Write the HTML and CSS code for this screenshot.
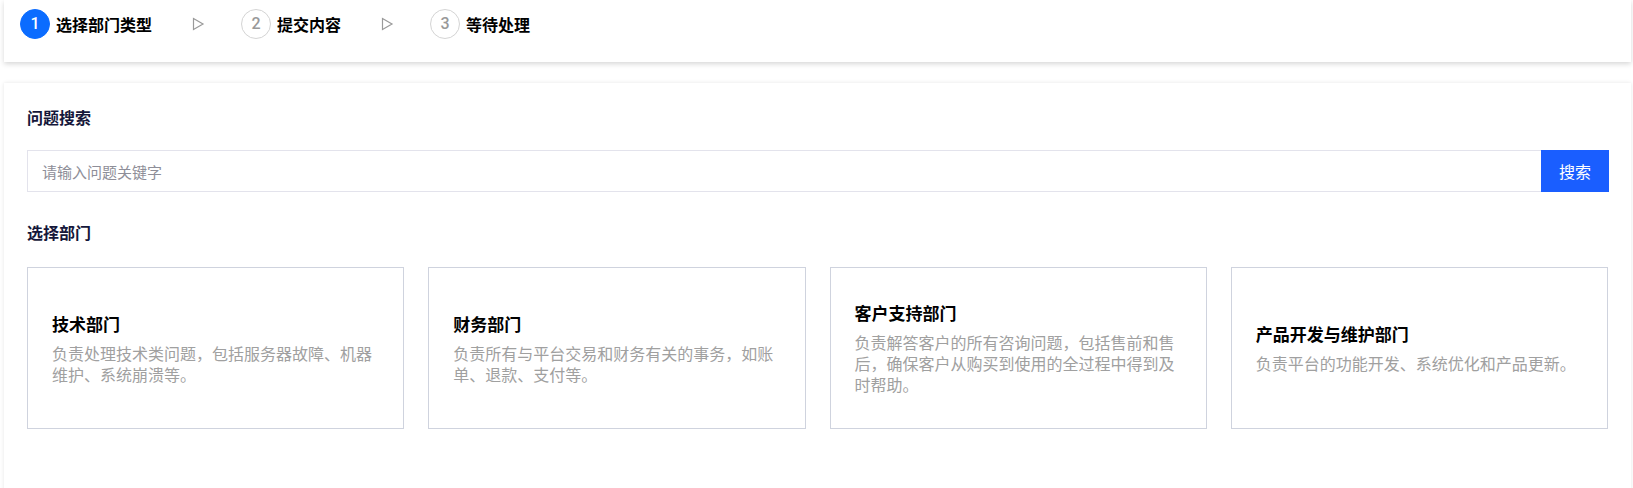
FILE: index.html
```html
<!DOCTYPE html>
<html lang="zh-CN">
<head>
  <meta charset="UTF-8">
  <meta name="viewport" content="width=device-width, initial-scale=1.0">
  <title>提交工单</title>
  <link rel="stylesheet" href="styles.css">
</head>
<body>

  <!-- Steps -->
  <div class="steps-bar">
    <div class="step active">
      <span class="step-num">1</span>
      <span class="step-text">选择部门类型</span>
    </div>
    <svg class="step-arrow" viewBox="0 0 14 14"><path d="M2.5 1.5 L12 7 L2.5 12.5 Z" /></svg>
    <div class="step">
      <span class="step-num">2</span>
      <span class="step-text">提交内容</span>
    </div>
    <svg class="step-arrow" viewBox="0 0 14 14"><path d="M2.5 1.5 L12 7 L2.5 12.5 Z" /></svg>
    <div class="step">
      <span class="step-num">3</span>
      <span class="step-text">等待处理</span>
    </div>
  </div>

  <!-- Main -->
  <div class="main-card">
    <h3 class="section-title">问题搜索</h3>
    <div class="search-box">
      <input type="text" placeholder="请输入问题关键字">
      <button type="button">搜索</button>
    </div>

    <h3 class="section-title">选择部门</h3>
    <div class="dept-list">
      <div class="dept-card">
        <h4>技术部门</h4>
        <p>负责处理技术类问题，包括服务器故障、机器维护、系统崩溃等。</p>
      </div>
      <div class="dept-card">
        <h4>财务部门</h4>
        <p>负责所有与平台交易和财务有关的事务，如账单、退款、支付等。</p>
      </div>
      <div class="dept-card">
        <h4>客户支持部门</h4>
        <p>负责解答客户的所有咨询问题，包括售前和售后，确保客户从购买到使用的全过程中得到及时帮助。</p>
      </div>
      <div class="dept-card">
        <h4>产品开发与维护部门</h4>
        <p>负责平台的功能开发、系统优化和产品更新。</p>
      </div>
    </div>
  </div>

</body>
</html>
```

FILE: styles.css
```css
/* Reset */
* {
  margin: 0;
  padding: 0;
  box-sizing: border-box;
}

body {
  font-family: "Noto Sans CJK SC", "Liberation Sans", sans-serif;
  background: #fff;
  padding: 0 2px 0 4px;
  overflow: hidden;
}

/* Steps bar */
.steps-bar {
  display: flex;
  align-items: center;
  height: 62px;
  padding: 0 16px 15px;
  background: #fff;
  box-shadow: 0 2px 5px rgba(0, 0, 0, 0.16);
}

.step {
  display: flex;
  align-items: center;
  gap: 6px;
}

.step-num {
  width: 30px;
  height: 30px;
  border-radius: 50%;
  border: 1px solid #d4d4d4;
  color: #999;
  font-family: Roboto, "Liberation Sans", sans-serif;
  font-size: 16px;
  font-weight: 500;
  display: flex;
  align-items: center;
  justify-content: center;
}

.step.active .step-num {
  background: #0b6cff;
  border-color: #0b6cff;
  color: #fff;
}

.step-text {
  font-size: 16px;
  font-weight: 700;
  color: #000;
}

.step-arrow {
  width: 14px;
  height: 14px;
  margin: 0 36px 0 39px;
  fill: none;
  stroke: #9a9a9a;
  stroke-width: 1.2;
}

/* Main card */
.main-card {
  margin-top: 21px;
  height: 420px;
  padding: 22px 22px 0 23px;
  background: #fff;
  box-shadow: 0 0 4px rgba(0, 0, 0, 0.1);
}

.section-title {
  font-size: 16px;
  font-weight: 700;
  color: #15173a;
  line-height: 24px;
}

/* Search */
.search-box {
  display: flex;
  height: 42px;
  margin: 21px 0 28px;
}

.search-box input {
  flex: 1;
  border: 1px solid #e3e3ec;
  border-right: none;
  outline: none;
  padding: 0 14px;
  font-family: inherit;
  font-size: 15px;
  color: #333;
}

.search-box input::placeholder {
  color: #8e8e98;
}

.search-box button {
  width: 68px;
  border: none;
  background: #1a5eff;
  color: #fff;
  font-family: inherit;
  font-size: 16px;
  cursor: pointer;
}

/* Departments */
.dept-list {
  display: grid;
  grid-template-columns: repeat(4, 1fr);
  gap: 24px;
  margin-top: 23px;
  padding-right: 1px;
}

.dept-card {
  height: 162px;
  border: 1px solid #cfd3de;
  padding: 0 24px;
  display: flex;
  flex-direction: column;
  justify-content: center;
  cursor: pointer;
}

.dept-card h4 {
  font-size: 17px;
  font-weight: 700;
  color: #000;
  line-height: 24px;
  margin-bottom: 7px;
}

.dept-card p {
  font-size: 16px;
  color: #a0a0a0;
  line-height: 21px;
}
```
